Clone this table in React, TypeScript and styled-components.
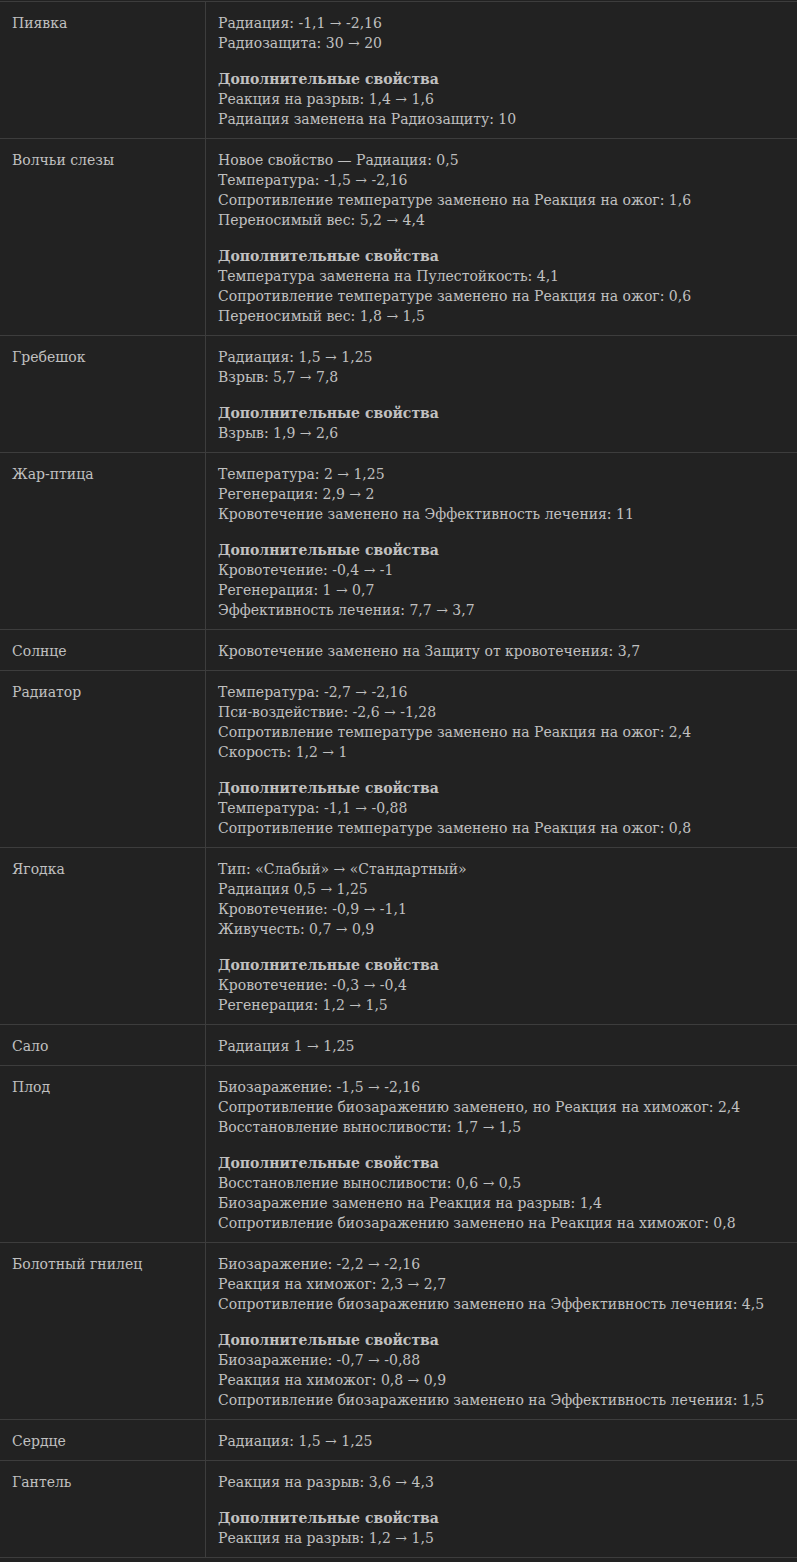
import React from 'react';
import styled, { createGlobalStyle } from 'styled-components';

const GlobalStyle = createGlobalStyle`
    html, body {
        margin: 0;
        padding: 0;
        background: #222222;
    }
    body {
        padding-top: 1px;
        font-family: "DejaVu Serif", "Liberation Serif", serif;
    }
`;

interface IRow {
    name: string;
    main: string[];
    extra?: string[];
}

const rows: IRow[] = [
    {
        name: 'Пиявка',
        main: ['Радиация: -1,1 → -2,16', 'Радиозащита: 30 → 20'],
        extra: ['Реакция на разрыв: 1,4 → 1,6', 'Радиация заменена на Радиозащиту: 10'],
    },
    {
        name: 'Волчьи слезы',
        main: [
            'Новое свойство — Радиация: 0,5',
            'Температура: -1,5 → -2,16',
            'Сопротивление температуре заменено на Реакция на ожог: 1,6',
            'Переносимый вес: 5,2 → 4,4',
        ],
        extra: [
            'Температура заменена на Пулестойкость: 4,1',
            'Сопротивление температуре заменено на Реакция на ожог: 0,6',
            'Переносимый вес: 1,8 → 1,5',
        ],
    },
    {
        name: 'Гребешок',
        main: ['Радиация: 1,5 → 1,25', 'Взрыв: 5,7 → 7,8'],
        extra: ['Взрыв: 1,9 → 2,6'],
    },
    {
        name: 'Жар-птица',
        main: [
            'Температура: 2 → 1,25',
            'Регенерация: 2,9 → 2',
            'Кровотечение заменено на Эффективность лечения: 11',
        ],
        extra: ['Кровотечение: -0,4 → -1', 'Регенерация: 1 → 0,7', 'Эффективность лечения: 7,7 → 3,7'],
    },
    {
        name: 'Солнце',
        main: ['Кровотечение заменено на Защиту от кровотечения: 3,7'],
    },
    {
        name: 'Радиатор',
        main: [
            'Температура: -2,7 → -2,16',
            'Пси-воздействие: -2,6 → -1,28',
            'Сопротивление температуре заменено на Реакция на ожог: 2,4',
            'Скорость: 1,2 → 1',
        ],
        extra: ['Температура: -1,1 → -0,88', 'Сопротивление температуре заменено на Реакция на ожог: 0,8'],
    },
    {
        name: 'Ягодка',
        main: [
            'Тип: «Слабый» → «Стандартный»',
            'Радиация 0,5 → 1,25',
            'Кровотечение: -0,9 → -1,1',
            'Живучесть: 0,7 → 0,9',
        ],
        extra: ['Кровотечение: -0,3 → -0,4', 'Регенерация: 1,2 → 1,5'],
    },
    {
        name: 'Сало',
        main: ['Радиация 1 → 1,25'],
    },
    {
        name: 'Плод',
        main: [
            'Биозаражение: -1,5 → -2,16',
            'Сопротивление биозаражению заменено, но Реакция на химожог: 2,4',
            'Восстановление выносливости: 1,7 → 1,5',
        ],
        extra: [
            'Восстановление выносливости: 0,6 → 0,5',
            'Биозаражение заменено на Реакция на разрыв: 1,4',
            'Сопротивление биозаражению заменено на Реакция на химожог: 0,8',
        ],
    },
    {
        name: 'Болотный гнилец',
        main: [
            'Биозаражение: -2,2 → -2,16',
            'Реакция на химожог: 2,3 → 2,7',
            'Сопротивление биозаражению заменено на Эффективность лечения: 4,5',
        ],
        extra: [
            'Биозаражение: -0,7 → -0,88',
            'Реакция на химожог: 0,8 → 0,9',
            'Сопротивление биозаражению заменено на Эффективность лечения: 1,5',
        ],
    },
    {
        name: 'Сердце',
        main: ['Радиация: 1,5 → 1,25'],
    },
    {
        name: 'Гантель',
        main: ['Реакция на разрыв: 3,6 → 4,3'],
        extra: ['Реакция на разрыв: 1,2 → 1,5'],
    },
];

const Table = styled.table`
    width: 100%;
    border-collapse: collapse;
    background: #222222;
    color: #c0c0c0;
    font-size: 14px;
    line-height: 20px;
`;

const Row = styled.tr`
    border-top: 1px solid #3d3d3d;
    border-bottom: 1px solid #3d3d3d;
`;

const Cell = styled.td<{ $first?: boolean }>`
    vertical-align: top;
    padding: 11px 12px 9px;
    width: ${p => (p.$first ? '181px' : 'auto')};
    border-right: ${p => (p.$first ? '1px solid #3d3d3d' : 'none')};
`;

const Block = styled.div`
    & + & {
        margin-top: 16px;
    }
`;

const Line = styled.div`
    white-space: nowrap;
`;

const Heading = styled.div`
    font-weight: 700;
`;

const App: React.FC = () => {
    return (
        <>
            <GlobalStyle />
            <Table>
                <tbody>
                    {rows.map(row => (
                        <Row key={row.name}>
                            <Cell $first>{row.name}</Cell>
                            <Cell>
                                <Block>
                                    {row.main.map((l, i) => <Line key={i}>{l}</Line>)}
                                </Block>
                                {row.extra &&
                                <Block>
                                    <Heading>Дополнительные свойства</Heading>
                                    {row.extra.map((l, i) => <Line key={i}>{l}</Line>)}
                                </Block>
                                }
                            </Cell>
                        </Row>
                    ))}
                </tbody>
            </Table>
        </>
    );
};

export default App;
